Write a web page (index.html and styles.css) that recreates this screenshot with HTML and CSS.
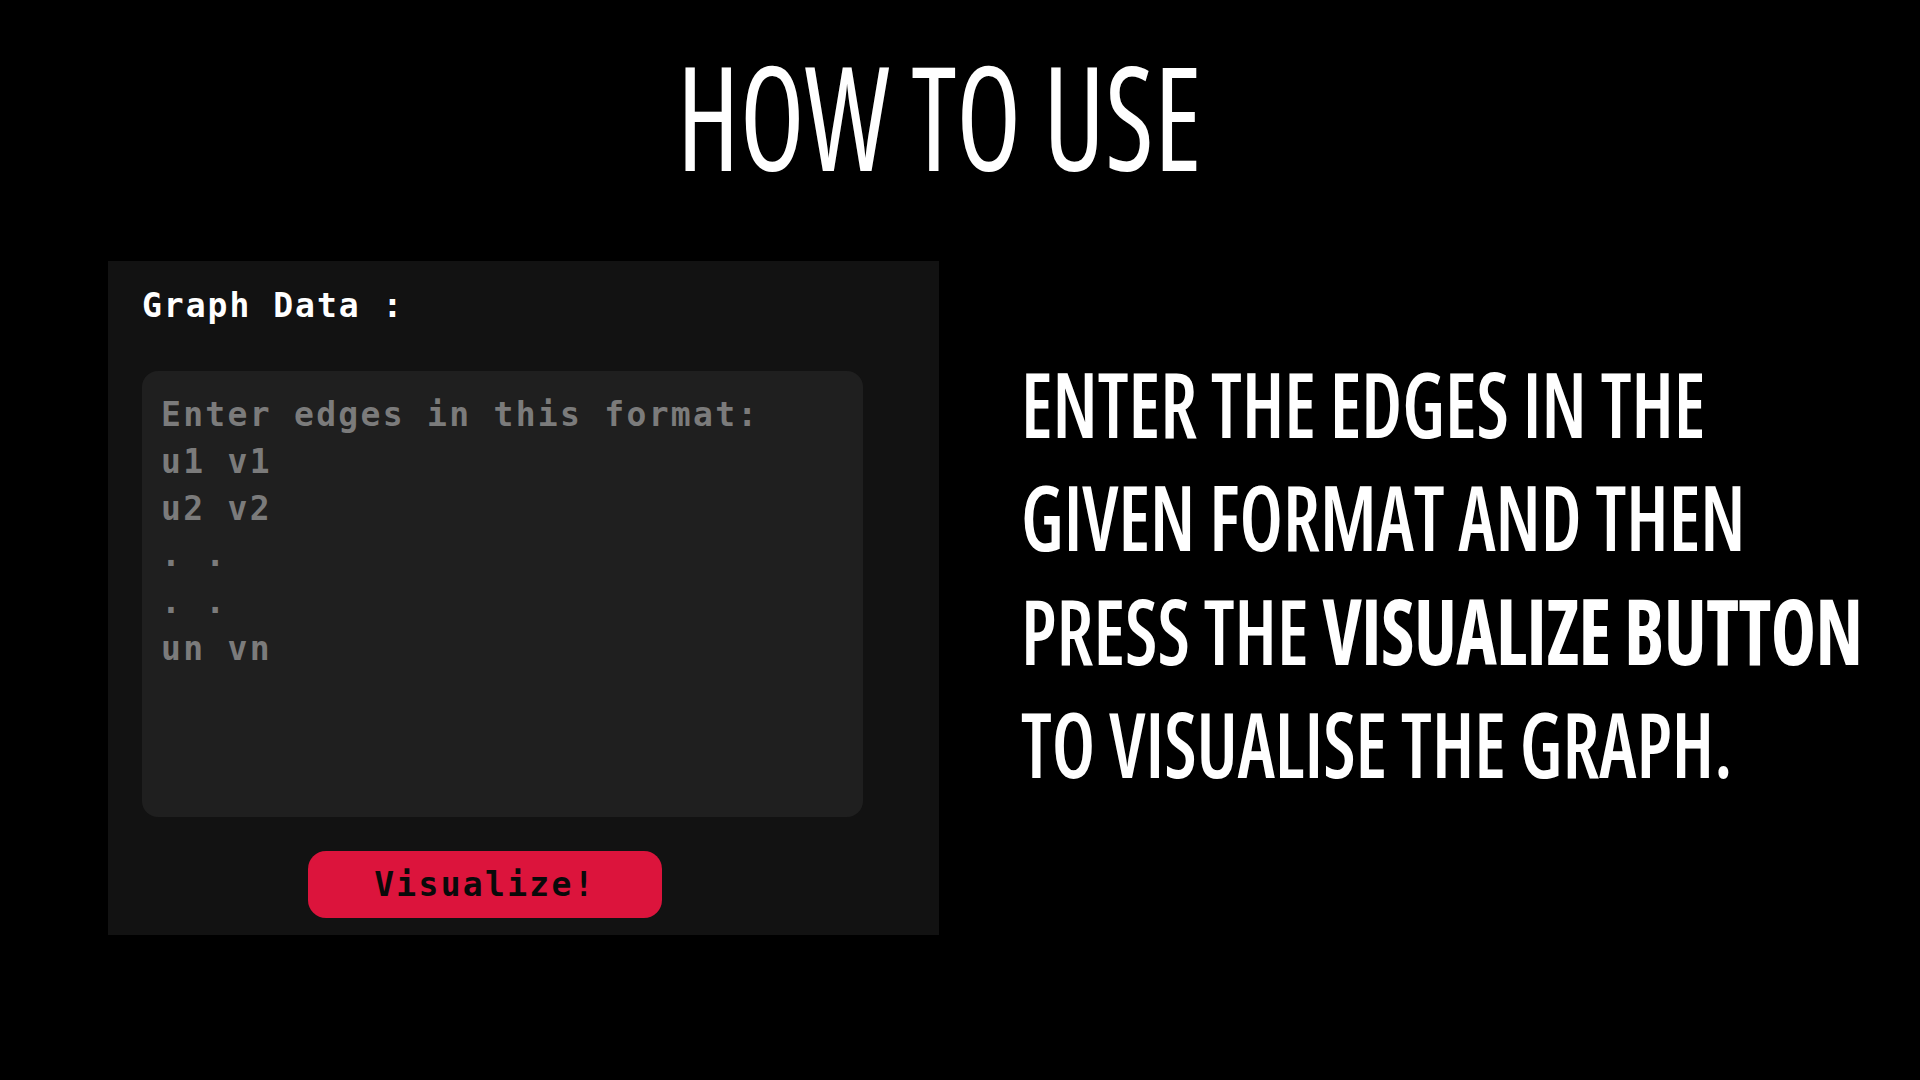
FILE: index.html
```html
<!DOCTYPE html>
<html lang="en">
<head>
<meta charset="utf-8">
<title>How to use</title>
<link rel="stylesheet" href="styles.css">
</head>
<body>
<header class="page-title"><h1 class="title-text">HOW TO USE</h1></header>
<main class="content">
  <section class="panel">
    <h2 class="panel-label">Graph Data :</h2>
    <div class="edges-box">Enter edges in this format:
u1 v1
u2 v2
. .
. .
un vn</div>
    <button class="visualize-btn" type="button">Visualize!</button>
  </section>
  <section class="instructions">
    <p class="instructions-text">ENTER THE EDGES IN THE<br>GIVEN FORMAT AND THEN<br>PRESS THE <strong class="hl">VISUALIZE BUTTON</strong><br>TO VISUALISE THE GRAPH.</p>
  </section>
</main>
</body>
</html>
```
FILE: styles.css
```css
html, body {
  margin: 0;
  padding: 0;
  background: #000;
  width: 1920px;
  height: 1080px;
  overflow: hidden;
}

.page-title {
  margin-top: 43px;
  padding-right: 42px;
  text-align: center;
  height: 144px;
}

.title-text {
  display: inline-block;
  margin: 0;
  font-family: "Open Sans", "Noto Sans", sans-serif;
  font-stretch: 75%;
  font-weight: 500;
  font-size: 144px;
  line-height: 144px;
  color: #fff;
  white-space: nowrap;
  transform: scaleX(0.827);
  transform-origin: center top;
}

.content {
  display: flex;
  align-items: flex-start;
}

.panel {
  flex: 0 0 auto;
  margin-left: 108px;
  margin-top: 74px;
  width: 831px;
  height: 674px;
  box-sizing: border-box;
  padding: 21.6px 0 0 34px;
  background: #121212;
  display: flex;
  flex-direction: column;
  align-items: flex-start;
}

.panel-label {
  margin: 0;
  font-family: "DejaVu Sans Mono", monospace;
  font-weight: 700;
  font-size: 33px;
  letter-spacing: 2px;
  line-height: 46px;
  color: #fff;
}

.edges-box {
  margin-top: 42px;
  width: 721px;
  height: 446.5px;
  box-sizing: border-box;
  padding: 21.5px 0 0 19px;
  background: #1f1f1f;
  border-radius: 16px;
  font-family: "DejaVu Sans Mono", monospace;
  font-weight: 700;
  font-size: 33px;
  letter-spacing: 2.3px;
  line-height: 46.7px;
  color: #7b7b7b;
  white-space: pre;
}

.visualize-btn {
  margin-top: 34px;
  margin-left: 166px;
  width: 354px;
  height: 67px;
  border: 0;
  border-radius: 18px;
  background: #dc143c;
  color: #0a0a0a;
  font-family: "DejaVu Sans Mono", monospace;
  font-weight: 700;
  font-size: 33px;
  letter-spacing: 2.3px;
  padding: 0;
  text-align: center;
}

.instructions {
  flex: 0 0 auto;
  margin-left: 82px;
  margin-top: 159px;
}

.instructions-text {
  margin: 0;
  display: inline-block;
  font-family: "Open Sans", "Noto Sans", sans-serif;
  font-stretch: 75%;
  font-weight: 600;
  font-size: 76.44px;
  line-height: 95.34px;
  color: #fff;
  white-space: nowrap;
  transform: scaleY(1.1905);
  transform-origin: left top;
}

.hl {
  font-weight: 750;
  letter-spacing: -0.5px;
}
```
